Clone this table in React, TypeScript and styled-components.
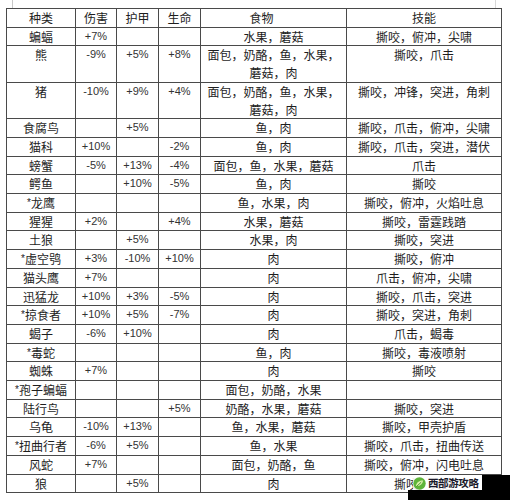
import React from "react";
import styled, { createGlobalStyle } from "styled-components";

const Global = createGlobalStyle`
  html, body { margin: 0; padding: 0; background: #fff; }
  body { font-family: "Noto Sans CJK SC", "Liberation Sans", sans-serif; }
`;

const Page = styled.div`
  position: relative;
  width: 510px;
  height: 500px;
  overflow: hidden;
  background: #fff;
`;

const TopEdge = styled.div`
  height: 8px;
  margin: 0 14px 0 12px;
  border-left: 1px solid #c8c8c8;
  border-right: 1px solid #d8d8d8;
`;

const Table = styled.table`
  border-collapse: collapse;
  table-layout: fixed;
  width: 495px;
  margin-left: 6px;
  background: #fff;
  color: #1e1e1e;
  font-size: 12px;
  font-family: "Noto Sans CJK SC", "Liberation Sans", sans-serif;
  border: 1px solid #3a3a3a;
`;

const Cell = styled.td<{ $num?: boolean }>`
  border: 1px solid #4a4a4a;
  padding: 0 3px;
  height: 17.7px;
  line-height: 17.7px;
  text-align: center;
  vertical-align: top;
  white-space: normal;
  font-family: ${(p) =>
    p.$num ? `"Liberation Sans", "Noto Sans CJK SC", sans-serif` : `"Noto Sans CJK SC", sans-serif`};
  font-size: ${(p) => (p.$num ? "11px" : "12px")};
  color: ${(p) => (p.$num ? "#333" : "#1e1e1e")};
`;

const HeadCell = styled(Cell).attrs({ as: "th" })<{ $offset?: number }>`
  font-weight: normal;
  padding-right: ${(p) => 3 + (p.$offset ?? 0)}px;
`;

const Star = styled.span`
  font-family: "Liberation Sans", sans-serif;
  font-size: 10px;
  vertical-align: 2px;
`;

const Watermark = styled.div`
  position: absolute;
  right: 0;
  bottom: 0;
  width: 102px;
  height: 25px;
`;

const BlackTall = styled.div`
  position: absolute;
  right: 0;
  top: 0;
  width: 28px;
  height: 25px;
  background: #000;
`;

const BlackLow = styled.div`
  position: absolute;
  left: 0;
  bottom: 0;
  width: 102px;
  height: 10px;
  background: #000;
`;

const Label = styled.div`
  position: absolute;
  left: 5px;
  top: 1px;
  display: flex;
  align-items: center;
  gap: 2px;
  background: rgba(255, 255, 255, 0.85);
  padding-right: 1px;
`;

const LabelText = styled.span`
  font-family: "Noto Sans CJK SC", sans-serif;
  font-weight: 700;
  font-size: 10.5px;
  line-height: 14px;
  color: #1a1a2a;
  letter-spacing: -0.4px;
`;

const cols = [69, 41, 42, 42, 146, 155];

type Row = [string, string, string, string, string, string];

const rows: Row[] = [
  ["蝙蝠", "+7%", "", "", "水果，蘑菇", "撕咬，俯冲，尖啸"],
  ["熊", "-9%", "+5%", "+8%", "面包，奶酪，鱼，水果，蘑菇，肉", "撕咬，爪击"],
  ["猪", "-10%", "+9%", "+4%", "面包，奶酪，鱼，水果，蘑菇，肉", "撕咬，冲锋，突进，角刺"],
  ["食腐鸟", "", "+5%", "", "鱼，肉", "撕咬，爪击，俯冲，尖啸"],
  ["猫科", "+10%", "", "-2%", "鱼，肉", "撕咬，爪击，突进，潜伏"],
  ["螃蟹", "-5%", "+13%", "-4%", "面包，鱼，水果，蘑菇", "爪击"],
  ["鳄鱼", "", "+10%", "-5%", "鱼，肉", "撕咬"],
  ["*龙鹰", "", "", "", "鱼，水果，肉", "撕咬，俯冲，火焰吐息"],
  ["猩猩", "+2%", "", "+4%", "水果，蘑菇", "撕咬，雷霆践踏"],
  ["土狼", "", "+5%", "", "水果，肉", "撕咬，突进"],
  ["*虚空鸮", "+3%", "-10%", "+10%", "肉", "撕咬，俯冲"],
  ["猫头鹰", "+7%", "", "", "肉", "爪击，俯冲，尖啸"],
  ["迅猛龙", "+10%", "+3%", "-5%", "肉", "撕咬，爪击，突进"],
  ["*掠食者", "+10%", "+5%", "-7%", "肉", "撕咬，突进，角刺"],
  ["蝎子", "-6%", "+10%", "", "肉", "爪击，蝎毒"],
  ["*毒蛇", "", "", "", "鱼，肉", "撕咬，毒液喷射"],
  ["蜘蛛", "+7%", "", "", "肉", "撕咬"],
  ["*孢子蝙蝠", "", "", "", "面包，奶酪，水果", ""],
  ["陆行鸟", "", "", "+5%", "奶酪，水果，蘑菇", "撕咬，突进"],
  ["乌龟", "-10%", "+13%", "", "鱼，水果，蘑菇", "撕咬，甲壳护盾"],
  ["*扭曲行者", "-6%", "+5%", "", "鱼，水果", "撕咬，爪击，扭曲传送"],
  ["风蛇", "+7%", "", "", "面包，奶酪，鱼", "撕咬，俯冲，闪电吐息"],
  ["狼", "", "+5%", "", "肉", "撕咬，突进"],
];

const headers: [string, number][] = [
  ["种类", 0],
  ["伤害", 0],
  ["护甲", 0],
  ["生命", 0],
  ["食物", 24],
  ["技能", 0],
];

const Name: React.FC<{ text: string }> = ({ text }) =>
  text.startsWith("*") ? (
    <>
      <Star>*</Star>
      {text.slice(1)}
    </>
  ) : (
    <>{text}</>
  );

const Logo = () => (
  <svg width="13" height="13" viewBox="0 0 13 13">
    <circle cx="6.5" cy="6.5" r="6.2" fill="#5fb53a" />
    <path d="M3 8.5 C4 4.5 7 3.2 10.2 3.4 C9.6 6.8 7.4 9 3.6 9.2 Z" fill="#d9f0a8" />
    <path d="M3.4 9.6 L8.2 5.2" stroke="#3d8f22" strokeWidth="0.9" />
  </svg>
);

export default function App() {
  return (
    <Page>
      <Global />
      <TopEdge />
      <Table>
        <colgroup>
          {cols.map((w, i) => (
            <col key={i} style={{ width: w }} />
          ))}
        </colgroup>
        <thead>
          <tr>
            {headers.map(([h, off]) => (
              <HeadCell key={h} $offset={off}>
                {h}
              </HeadCell>
            ))}
          </tr>
        </thead>
        <tbody>
          {rows.map((r) => (
            <tr key={r[0]}>
              <Cell>
                <Name text={r[0]} />
              </Cell>
              <Cell $num>{r[1]}</Cell>
              <Cell $num>{r[2]}</Cell>
              <Cell $num>{r[3]}</Cell>
              <Cell>{r[4]}</Cell>
              <Cell>{r[5]}</Cell>
            </tr>
          ))}
        </tbody>
      </Table>
      <Watermark>
        <BlackTall />
        <BlackLow />
        <Label>
          <Logo />
          <LabelText>西部游攻略</LabelText>
        </Label>
      </Watermark>
    </Page>
  );
}
